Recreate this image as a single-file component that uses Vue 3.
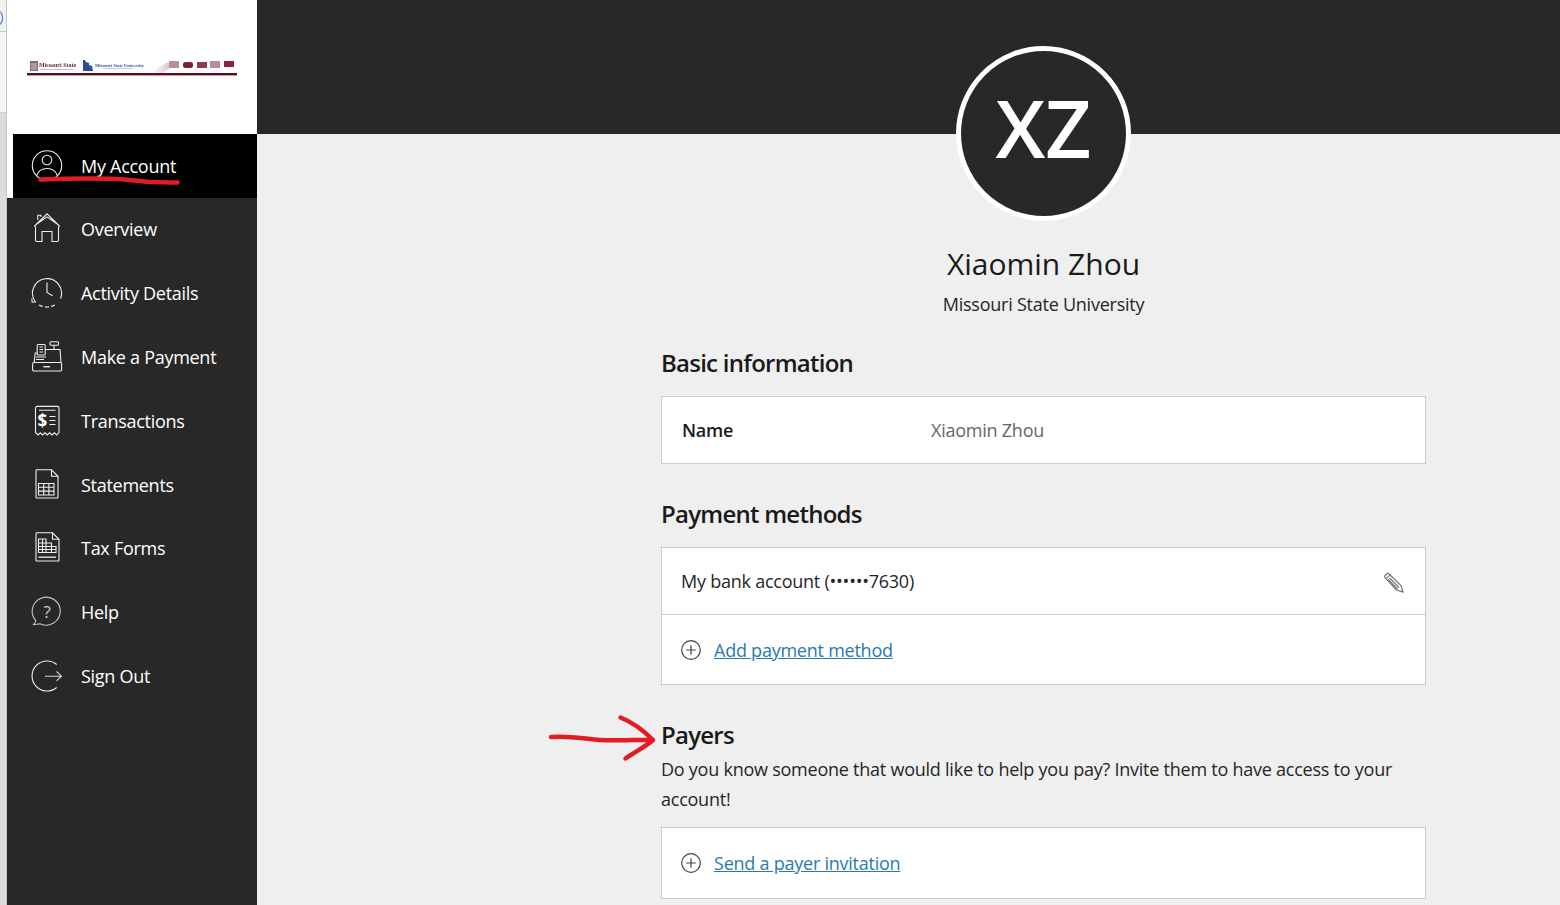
<template>
  <div class="page">
    <div class="window-edge">
      <div class="edge-tab"><span class="edge-ring"></span></div>
      <div class="edge-mid"></div>
    </div>

    <aside class="sidebar">
      <div class="logo">
        <svg class="logo-art" width="210" height="20" viewBox="0 0 210 20">
          <defs>
            <linearGradient id="sweep" x1="0" x2="1" y1="0" y2="0">
              <stop offset="0" stop-color="#6b2a3c" stop-opacity="0" />
              <stop offset="0.7" stop-color="#6b2a3c" stop-opacity="0.3" />
              <stop offset="1" stop-color="#6b2a3c" stop-opacity="0" />
            </linearGradient>
          </defs>
          <rect x="3" y="3" width="8" height="10" fill="#8a6a72" />
          <path d="M5 5v7M7 5v7M9 5v7" stroke="#e8dde0" stroke-width="0.8" />
          <text x="12" y="9" class="logo-text maroon">Missouri State</text>
          <rect x="13" y="11" width="33" height="1" fill="#c9bcc0" />
          <path d="M56 2h2l1 2 3 1v2l3 1 1 5H56z" fill="#2a4c9c" />
          <text x="68" y="8.500" class="logo-small blue">Missouri State University</text>
          <rect x="76" y="10" width="30" height="1" fill="#c4c9de" />
          <path d="M125 14l14-9 14-1-18 11z" fill="url(#sweep)" />
          <rect x="142" y="3" width="10" height="7" fill="#b98f9a" />
          <rect x="156" y="4" width="10" height="6" rx="2.500" fill="#7a1f36" />
          <rect x="170" y="4" width="10" height="6" fill="#8f3a4e" />
          <rect x="183" y="3" width="10" height="7" fill="#b88d98" />
          <rect x="197" y="3" width="10" height="6" fill="#8a2238" />
          <rect x="0" y="15" width="210" height="2.400" fill="#5f0a1e" />
        </svg>
      </div>

      <nav class="nav">
        <a
          v-for="item in navItems"
          :key="item.label"
          class="nav-item"
          :class="{ active: item.icon === 'user' }"
        >
          <svg class="nav-icon" viewBox="0 0 32 32" fill="none" stroke="currentColor" stroke-width="1.100">
            <template v-if="item.icon === 'user'">
              <circle cx="16" cy="15.500" r="14.700" />
              <circle cx="16" cy="10" r="4.800" />
              <path d="M5.500 26c1.500-5 5.500-7.500 10.500-7.500s9 2.500 10.500 7.500" />
            </template>
            <template v-else-if="item.icon === 'home'">
              <path d="M3.200 13.500L16 .8l12.800 12.700M6.800 7V2.200h3.200v1.700M6.500 10.500L16 3.800l9.500 6.700" />
              <path d="M4.500 13.500v13.800q0 1.200 1.200 1.200H11V18.500h10v10h5.300q1.200 0 1.200-1.200V13.500" />
            </template>
            <template v-else-if="item.icon === 'clock'">
              <path d="M4.500 25A14.500 14.500 0 1 1 29.500 21.500" />
              <path d="M8 28q3.700 2 8 2t8.500-2.500" stroke-dasharray="4 2.200" />
              <path d="M16 5.500v10l5.600 3.300" />
              <path d="M.8 21.500l.4 3.700 3.800-.2" />
            </template>
            <template v-else-if="item.icon === 'register'">
              <rect x="1.600" y="21.500" width="29" height="8.500" rx="1.200" />
              <path d="M12.300 25.700h6.700" stroke-width="1.400" />
              <path d="M3.200 21.500l1-9.500h1.800M14 8.500h15l1 13" />
              <rect x="6.200" y="3.500" width="8" height="10.500" rx="1" />
              <path d="M8.500 6h3.500M8.500 8.500h3.500M8.500 11h3.500" />
              <rect x="19" y=".8" width="8.500" height="3.500" rx="1" />
              <path d="M23 4.300v4.200M5 16h10M5 18.500h8" />
            </template>
            <template v-else-if="item.icon === 'receipt'">
              <path d="M4.500 27.500V3q0-1.600 1.600-1.600h20.300q1.600 0 1.600 1.600v24.500l-2.300 2.500-2.300-2.200-2.400 2.200-2.300-2.200-2.400 2.200-2.300-2.200-2.400 2.200-2.300-2.200-2.300 2.200z" />
              <path d="M8 5.200h16.500M18.500 11.500h6M18.500 15.500h6M18.500 19.500h6" />
              <text x="6.500" y="21.500" class="icon-dollar">$</text>
            </template>
            <template v-else-if="item.icon === 'sheet'">
              <path d="M5 .8h15.500L27 7.300V28q0 1-1 1H6q-1 0-1-1V1.800q0-1 1-1z" />
              <path d="M20.500 .8v6.500H27" />
              <path d="M7.500 14.500h15.500v11.500H7.500zM7.500 18.300h15.500M7.500 22.100h15.500M12.700 14.500v11.500M17.900 14.500v11.500" />
            </template>
            <template v-else-if="item.icon === 'form'">
              <path d="M5 .8h16.500L28 7.300V28q0 1-1 1H6q-1 0-1-1V1.800q0-1 1-1z" />
              <path d="M21.500 .8v6.500H28" />
              <path d="M7.500 7h7.500v4h5.500v3.500H25v6H7.500zM7.500 11h7.500M7.500 14.500h13M7.500 17.500H25M11.500 7v13.500M15 11v9.500M20.500 14.500v6" />
              <path d="M7.500 25.200H25" stroke-width="1.300" />
            </template>
            <template v-else-if="item.icon === 'help'">
              <path d="M4.800 24.500A14 14 0 1 1 9 27.700L2 28.800q2.300-1.500 2.800-4.300z" stroke="#c8c8c8" />
              <text x="16" y="21.500" class="icon-help">?</text>
            </template>
            <template v-else>
              <path d="M25.700 4.500a15 15 0 1 0 0 23" />
              <path d="M14 16.200h16.200M25.500 11.500l5 4.700-5 4.700" stroke="#d8d8d8" />
            </template>
          </svg>
          <span>{{ item.label }}</span>
        </a>
      </nav>
    </aside>

    <main class="main">
      <div class="banner"></div>
      <section class="profile">
        <div class="avatar">XZ</div>
        <h1 class="profile-name">Xiaomin Zhou</h1>
        <p class="profile-org">Missouri State University</p>

        <h2 class="section-title first">Basic information</h2>
        <div class="card">
          <div class="row name-row">
            <strong class="field-label">Name</strong>
            <span class="field-value">Xiaomin Zhou</span>
          </div>
        </div>

        <h2 class="section-title">Payment methods</h2>
        <div class="card">
          <div class="row bank-row">
            <span>My bank account (••••••7630)</span>
            <svg class="pencil" width="22" height="22" viewBox="0 0 22 22" fill="none" stroke="#777" stroke-width="1.200">
              <path d="M2 3.500L4 1.500q.8-.6 1.500 0L18 13.500l2 6.500-6.500-2L1.800 5.500q-.5-1.200.2-2z" />
              <path d="M3.500 6.300l4-4M6.500 6l9.500 9.500M5 7.500l9.500 9.500M18.500 18.500l1 1.500" />
            </svg>
          </div>
          <div class="row action-row divider">
            <svg class="plus" width="20" height="20" viewBox="0 0 20 20" fill="none" stroke="#444" stroke-width="1.200">
              <circle cx="10" cy="10" r="9.300" />
              <path d="M10 5.200v9.600M5.200 10h9.600" />
            </svg>
            <a class="link">Add payment method</a>
          </div>
        </div>

        <h2 class="section-title payers">Payers</h2>
        <p class="payers-text">Do you know someone that would like to help you pay? Invite them to have access to your account!</p>
        <div class="card">
          <div class="row action-row invite-row">
            <svg class="plus" width="20" height="20" viewBox="0 0 20 20" fill="none" stroke="#444" stroke-width="1.200">
              <circle cx="10" cy="10" r="9.300" />
              <path d="M10 5.200v9.600M5.200 10h9.600" />
            </svg>
            <a class="link">Send a payer invitation</a>
          </div>
        </div>
      </section>
    </main>

    <!-- red marker strokes drawn over the screenshot -->
    <svg class="marker" width="1560" height="905" fill="none" stroke="#e31b23" stroke-linecap="round" stroke-linejoin="round">
      <path d="M40.500 179.500C70 178.500 105 178 125 179.500C140 181.500 150 183 177.500 182.500" stroke-width="4.500" />
      <path d="M551 737C570 735.500 585 739 600 740C620 741 640 739.500 652 740" stroke-width="4.500" />
      <path d="M620.500 717.500C632 722 645 732 653 740C645 747 635 752 625.500 758.500" stroke-width="4.500" />
    </svg>
  </div>
</template>

<script setup>
const navItems = [
  { label: 'My Account', icon: 'user' },
  { label: 'Overview', icon: 'home' },
  { label: 'Activity Details', icon: 'clock' },
  { label: 'Make a Payment', icon: 'register' },
  { label: 'Transactions', icon: 'receipt' },
  { label: 'Statements', icon: 'sheet' },
  { label: 'Tax Forms', icon: 'form' },
  { label: 'Help', icon: 'help' },
  { label: 'Sign Out', icon: 'signout' },
]
</script>

<style scoped>
.page {
  position: relative;
  display: flex;
  width: 1560px;
  height: 905px;
  overflow: hidden;
  background: #efefef;
  color: #262626;
  font-family: "Open Sans", "Noto Sans", sans-serif;
  font-size: 18px;
}

.window-edge {
  flex: 0 0 7px;
  box-sizing: border-box;
  background: #dcdcdc;
  border-right: 1px solid #c4c4c4;
}

.edge-tab {
  height: 31px;
  background: #f0f0f0;
  border-bottom: 1px solid #c8c8c8;
  overflow: hidden;
}

.edge-ring {
  display: block;
  width: 8px;
  height: 14px;
  margin: 11px 0 0 -5px;
  border: 1.500px solid #2b6fc0;
  border-radius: 50%;
  box-sizing: border-box;
}

.edge-mid {
  height: 80px;
  background: #f3f3f3;
  border-bottom: 1px solid #d0d0d0;
}

.sidebar {
  flex: 0 0 250px;
  display: flex;
  flex-direction: column;
  background: #282828;
}

.logo {
  height: 134px;
  box-sizing: border-box;
  padding: 58px 20px 0;
  background: #fff;
}

.logo-art {
  display: block;
  filter: blur(0.4px);
}

.logo-text {
  font-family: "Liberation Serif", serif;
  font-size: 6px;
  font-weight: 700;
}

.logo-small {
  font-family: "Liberation Serif", serif;
  font-size: 4.500px;
  font-weight: 700;
}

.maroon {
  fill: #5f2a38;
}

.blue {
  fill: #3a55a8;
}

.nav {
  display: flex;
  flex-direction: column;
}

.nav-item {
  display: flex;
  align-items: center;
  gap: 18px;
  height: 63.800px;
  box-sizing: border-box;
  padding-left: 18px;
  border-left: 6px solid transparent;
  color: #fff;
  letter-spacing: -0.280px;
}

.nav-item.active {
  height: 63.550px;
  background: #000;
  border-left-color: #fff;
}

.nav-icon {
  flex: 0 0 32px;
  width: 32px;
  height: 32px;
  color: #eee;
}

.icon-dollar {
  font-family: "Open Sans", sans-serif;
  font-size: 17px;
  font-weight: 700;
  fill: #fff;
  stroke: none;
}

.icon-help {
  font-family: "Open Sans", sans-serif;
  font-size: 17px;
  fill: #ccc;
  stroke: none;
  text-anchor: middle;
}

.main {
  flex: 1;
  min-width: 0;
}

.banner {
  height: 134px;
  background: #282828;
}

.profile {
  display: flex;
  flex-direction: column;
  width: 765px;
  margin: -88px 0 0 404px;
  letter-spacing: -0.240px;
}

.avatar {
  align-self: center;
  flex: 0 0 175px;
  width: 175px;
  height: 175px;
  box-sizing: border-box;
  border: 5px solid #fff;
  border-radius: 50%;
  background: #282828;
  color: #fff;
  font-family: "Open Sans", sans-serif;
  font-size: 80px;
  font-weight: 600;
  line-height: 151px;
  text-align: center;
  letter-spacing: 0;
}

.profile-name {
  margin: 22px 0 0;
  font-size: 30px;
  font-weight: 400;
  line-height: 42px;
  letter-spacing: 0;
  text-align: center;
  color: #1a1a1a;
}

.profile-org {
  margin: 7px 0 0;
  line-height: 24px;
  text-align: center;
}

.section-title {
  margin: 33px 0 16px;
  font-size: 24px;
  font-weight: 600;
  line-height: 34px;
  letter-spacing: -0.750px;
  color: #1a1a1a;
}

.section-title.first {
  margin-top: 30px;
}

.section-title.payers {
  margin: 33px 0 0;
}

.card {
  background: #fff;
  border: 1px solid #ccc;
}

.row {
  display: flex;
  align-items: center;
  padding: 0 20px;
}

.name-row {
  height: 66px;
}

.field-label {
  flex: 0 0 249px;
  font-weight: 600;
  color: #1a1a1a;
}

.field-value {
  color: #666;
}

.bank-row {
  justify-content: space-between;
  height: 66px;
  padding-left: 19px;
}

.pencil {
  margin-top: 4px;
}

.action-row {
  gap: 13px;
  padding-left: 19px;
}

.divider {
  height: 69px;
  border-top: 1px solid #ccc;
}

.invite-row {
  height: 70px;
}

.plus {
  flex: 0 0 20px;
}

.link {
  color: #2a7ab0;
  text-decoration: underline;
}

.payers-text {
  margin: 2px 0 13px;
  line-height: 30px;
}

.marker {
  position: absolute;
  top: 0;
  left: 0;
  pointer-events: none;
}
</style>

<style>
body {
  margin: 0;
}
</style>
